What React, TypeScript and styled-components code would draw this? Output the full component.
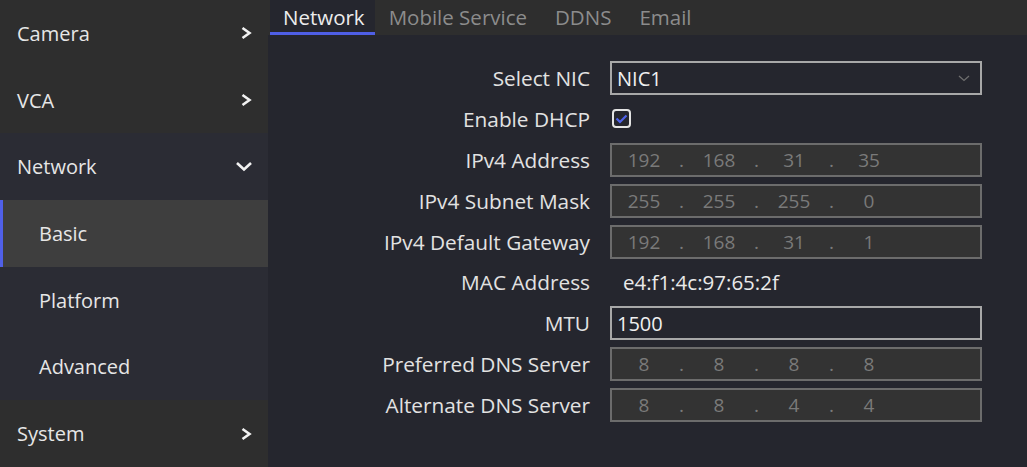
import React from 'react'
import styled, { createGlobalStyle } from 'styled-components'

const GlobalStyle = createGlobalStyle`
  html, body {
    margin: 0;
    padding: 0;
    background: #25262e;
  }
  body {
    font-family: 'Open Sans', 'DejaVu Sans', sans-serif;
    -webkit-font-smoothing: antialiased;
  }
`

const Layout = styled.div`
  display: flex;
  width: 1027px;
  height: 467px;
  overflow: hidden;
  background: #25262e;
`

const Sidebar = styled.nav`
  width: 268px;
  flex: none;
  display: flex;
  flex-direction: column;
`

const MenuItem = styled.div<{ $sub?: boolean; $group?: boolean; $active?: boolean }>`
  position: relative;
  flex: 1;
  display: flex;
  align-items: center;
  justify-content: space-between;
  padding: 0 15px 0 ${(p) => (p.$sub ? '39px' : '17px')};
  font-size: 20px;
  color: #e6e6e6;
  background: ${(p) => (p.$active ? '#3e3e3e' : p.$group ? '#2b2c34' : '#2e2e2e')};
  ${(p) =>
    p.$active &&
    `
    &::before {
      content: '';
      position: absolute;
      left: 0;
      top: 0;
      bottom: 0;
      width: 3px;
      background: #5060e8;
    }
  `}
`

const Main = styled.section`
  flex: 1;
  display: flex;
  flex-direction: column;
`

const TabBar = styled.div`
  height: 35px;
  display: flex;
  padding-left: 2px;
  background: #2e2e2e;
`

const Tab = styled.div<{ $active?: boolean }>`
  display: flex;
  align-items: center;
  padding: 2px ${(p) => (p.$active ? '10px 0 13px' : '14px 0 14px')};
  box-sizing: border-box;
  font-size: 20.5px;
  color: ${(p) => (p.$active ? '#ececec' : '#8c8c8c')};
  background: ${(p) => (p.$active ? '#25262e' : 'transparent')};
  border-bottom: 3px solid ${(p) => (p.$active ? '#4f5fe6' : 'transparent')};
`

const Form = styled.div`
  display: grid;
  grid-template-columns: 322px 372px;
  grid-auto-rows: 34px;
  column-gap: 20px;
  row-gap: 6.9px;
  padding-top: 26px;
`

const Label = styled.div`
  display: flex;
  align-items: center;
  justify-content: flex-end;
  font-size: 20.8px;
  color: #e2e2e2;
  white-space: nowrap;
`

const Field = styled.div<{ $disabled?: boolean }>`
  display: flex;
  align-items: center;
  box-sizing: border-box;
  height: 34px;
  padding: 0 5px;
  border: 2px solid ${(p) => (p.$disabled ? '#6c6c6c' : '#a8a8a8')};
  background: ${(p) => (p.$disabled ? '#333333' : '#25262e')};
  font-size: 20px;
  color: #f0f0f0;
`

const SelectField = styled(Field)`
  justify-content: space-between;
  padding-right: 10px;
`

const IpField = styled(Field)`
  padding: 0 2px;
  font-size: 19px;
  color: #7a7a7a;
`

const Octet = styled.span`
  width: 60px;
  text-align: center;
`

const Dot = styled.span`
  width: 15px;
  text-align: center;
`

const Plain = styled.div`
  display: flex;
  align-items: center;
  padding-left: 13px;
  font-size: 20.5px;
  color: #eaeaea;
`

const CheckCell = styled.div`
  display: flex;
  align-items: center;
  padding-left: 2px;
`

const CheckBox = styled.div`
  width: 19px;
  height: 19px;
  box-sizing: border-box;
  border: 2px solid #e4e4e4;
  border-radius: 4px;
  display: flex;
  align-items: center;
  justify-content: center;
`

const ChevronRight = () => (
  <svg width="13" height="14" viewBox="0 0 13 14">
    <polyline points="2.5,2 9.5,7 2.5,12" fill="none" stroke="#f2f2f2" strokeWidth="2.6" />
  </svg>
)

const ChevronDown = () => (
  <svg width="18" height="11" viewBox="0 0 18 11">
    <polyline points="2,2 9,8.5 16,2" fill="none" stroke="#f2f2f2" strokeWidth="2.6" />
  </svg>
)

const IpInput = ({ value }: { value: string }) => {
  const parts = value.split('.')
  return (
    <IpField $disabled>
      {parts.map((p, i) => (
        <React.Fragment key={i}>
          <Octet>{p}</Octet>
          {i < parts.length - 1 && <Dot>.</Dot>}
        </React.Fragment>
      ))}
    </IpField>
  )
}

export default function App() {
  return (
    <>
      <GlobalStyle />
      <Layout>
        <Sidebar>
          <MenuItem>
            Camera <ChevronRight />
          </MenuItem>
          <MenuItem>
            VCA <ChevronRight />
          </MenuItem>
          <MenuItem $group>
            Network <ChevronDown />
          </MenuItem>
          <MenuItem $group $sub $active>
            Basic
          </MenuItem>
          <MenuItem $group $sub>
            Platform
          </MenuItem>
          <MenuItem $group $sub>
            Advanced
          </MenuItem>
          <MenuItem>
            System <ChevronRight />
          </MenuItem>
        </Sidebar>
        <Main>
          <TabBar>
            <Tab $active>Network</Tab>
            <Tab>Mobile Service</Tab>
            <Tab>DDNS</Tab>
            <Tab>Email</Tab>
          </TabBar>
          <Form>
            <Label>Select NIC</Label>
            <SelectField>
              NIC1
              <svg width="12" height="7" viewBox="0 0 12 7">
                <polyline points="1,1 6,5.5 11,1" fill="none" stroke="#6e6e6e" strokeWidth="1.3" />
              </svg>
            </SelectField>

            <Label>Enable DHCP</Label>
            <CheckCell>
              <CheckBox>
                <svg width="13" height="10" viewBox="0 0 13 10">
                  <polyline points="1.5,4.5 5,8 11.5,1.5" fill="none" stroke="#4f62ea" strokeWidth="2.2" />
                </svg>
              </CheckBox>
            </CheckCell>

            <Label>IPv4 Address</Label>
            <IpInput value="192.168.31.35" />

            <Label>IPv4 Subnet Mask</Label>
            <IpInput value="255.255.255.0" />

            <Label>IPv4 Default Gateway</Label>
            <IpInput value="192.168.31.1" />

            <Label>MAC Address</Label>
            <Plain>e4:f1:4c:97:65:2f</Plain>

            <Label>MTU</Label>
            <Field>1500</Field>

            <Label>Preferred DNS Server</Label>
            <IpInput value="8.8.8.8" />

            <Label>Alternate DNS Server</Label>
            <IpInput value="8.8.4.4" />
          </Form>
        </Main>
      </Layout>
    </>
  )
}
